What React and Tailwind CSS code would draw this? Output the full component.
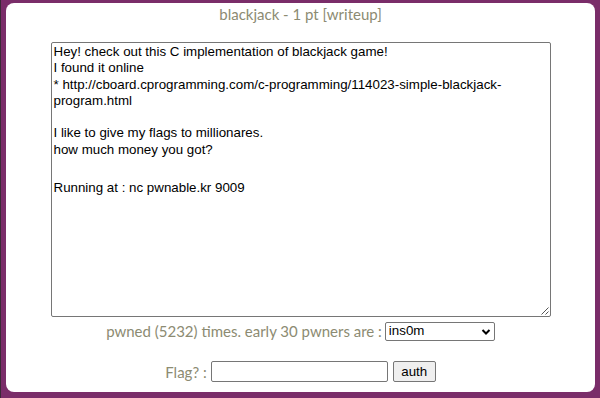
import React from "react";

const lines = [
  "Hey! check out this C implementation of blackjack game!",
  "I found it online",
  "* http://cboard.cprogramming.com/c-programming/114023-simple-blackjack-",
  "program.html",
  "",
  "I like to give my flags to millionares.",
  "how much money you got?",
];

export default function App() {
  return (
    <div className="w-[600px] h-[398px] bg-[#7a2d69] flex border-l border-l-[#3a2a36] pl-[5px] pt-[3px] pr-[5px] pb-[6px] overflow-hidden">
      <div className="flex-1 bg-white rounded-[8px] flex flex-col items-center">
        <div className="mt-[1px] text-[15px] leading-[20px] text-[#8c8b72] font-['Lato','Open_Sans',sans-serif]">
          blackjack - 1 pt [writeup]
        </div>
        <div className="relative mt-[18px] w-[500px] h-[275px] border border-[#767676] rounded-[2px] px-[2px] py-[1px] text-[13.33px] text-black font-['Liberation_Sans',Arial,sans-serif]">
          {lines.map((l, i) => (
            <div key={i} className="h-[16.3px] leading-[16.3px] whitespace-pre">
              {l}
            </div>
          ))}
          <div className="h-[22px]" />
          <div className="h-[16.3px] leading-[16.3px] whitespace-pre">Running at : nc pwnable.kr 9009</div>
          <svg className="absolute right-[1px] bottom-[1px]" width="9" height="9" viewBox="0 0 9 9">
            <path d="M8.5 1.5 L1.5 8.5 M8.5 5.5 L5.5 8.5" stroke="#555" strokeWidth="1" fill="none" />
          </svg>
        </div>
        <div className="mt-[3px] flex items-center gap-[3px] text-[15px] text-[#8c8b72] font-['Lato','Open_Sans',sans-serif]">
          <span>pwned (5232) times. early 30 pwners are :</span>
          <div className="relative w-[110px] h-[19px] border border-[#767676] rounded-[2px] flex items-center pl-[3px] text-[13.33px] text-black font-['Liberation_Sans',Arial,sans-serif]">
            <span>ins0m</span>
            <svg className="absolute right-[3px] top-[5px]" width="10" height="8" viewBox="0 0 10 8">
              <path d="M1.5 2 L5 5.5 L8.5 2" stroke="black" strokeWidth="2" fill="none" />
            </svg>
          </div>
        </div>
        <div className="mt-[18px] flex items-center text-[15px] text-[#8c8b72] font-['Lato','Open_Sans',sans-serif]">
          <span className="mr-[4px]">Flag? :</span>
          <div className="w-[177px] h-[21px] border border-[#767676] rounded-[2px]" />
          <div className="ml-[5px] w-[43px] h-[21px] border border-[#767676] rounded-[2px] bg-[#efefef] flex items-center justify-center text-[13.33px] text-black font-['Liberation_Sans',Arial,sans-serif]">
            auth
          </div>
        </div>
      </div>
    </div>
  );
}
